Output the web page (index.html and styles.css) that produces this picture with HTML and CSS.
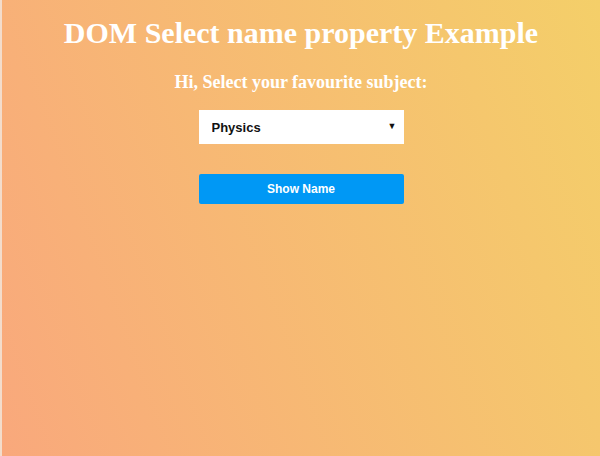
FILE: index.html
```html
<!DOCTYPE html>
<html lang="en">
<head>
    <meta charset="UTF-8">
    <meta name="viewport" content="width=device-width, initial-scale=1.0">
    <title>DOM Select name property</title>
    <link rel="stylesheet" href="styles.css">
</head>
<body>
    <h1>DOM Select name property Example</h1>
    <h3>Hi, Select your favourite subject:</h3>
    <div class="picker">
        <select id="subject" name="subject">
            <option value="physics">Physics</option>
            <option value="chemistry">Chemistry</option>
            <option value="maths">Maths</option>
        </select>
        <span class="arrow">&#9660;</span>
    </div>
    <button type="button" id="showBtn">Show Name</button>
    <p id="result"></p>
</body>
</html>
```

FILE: styles.css
```css
html, body {
    height: 100%;
}

body {
    margin: 0;
    font-family: "Liberation Serif", "Times New Roman", serif;
    background: linear-gradient(70deg, #f9a87c, #f4cf69);
    border-left: 2px solid #f3dccb;
    box-sizing: border-box;
    display: flex;
    flex-direction: column;
    align-items: center;
    color: #fff;
}

h1 {
    font-size: 30px;
    margin: 16px 0 0;
}

h3 {
    font-size: 18px;
    margin: 22px 0 0;
}

.picker {
    position: relative;
    width: 205px;
    margin-top: 17px;
}

select {
    width: 100%;
    height: 34px;
    border: none;
    border-radius: 0;
    background: #fff;
    font-family: "Liberation Sans", Arial, sans-serif;
    font-size: 13px;
    font-weight: bold;
    color: #111;
    padding: 0 13px;
    appearance: none;
    -webkit-appearance: none;
}

.arrow {
    position: absolute;
    right: 7px;
    top: 11px;
    font-size: 9px;
    color: #111;
    pointer-events: none;
}

button {
    width: 205px;
    height: 30px;
    margin-top: 30px;
    border: none;
    border-radius: 2px;
    background: #0098f5;
    color: #fff;
    font-family: "Liberation Sans", Arial, sans-serif;
    font-size: 12px;
    font-weight: bold;
    cursor: pointer;
}
```
